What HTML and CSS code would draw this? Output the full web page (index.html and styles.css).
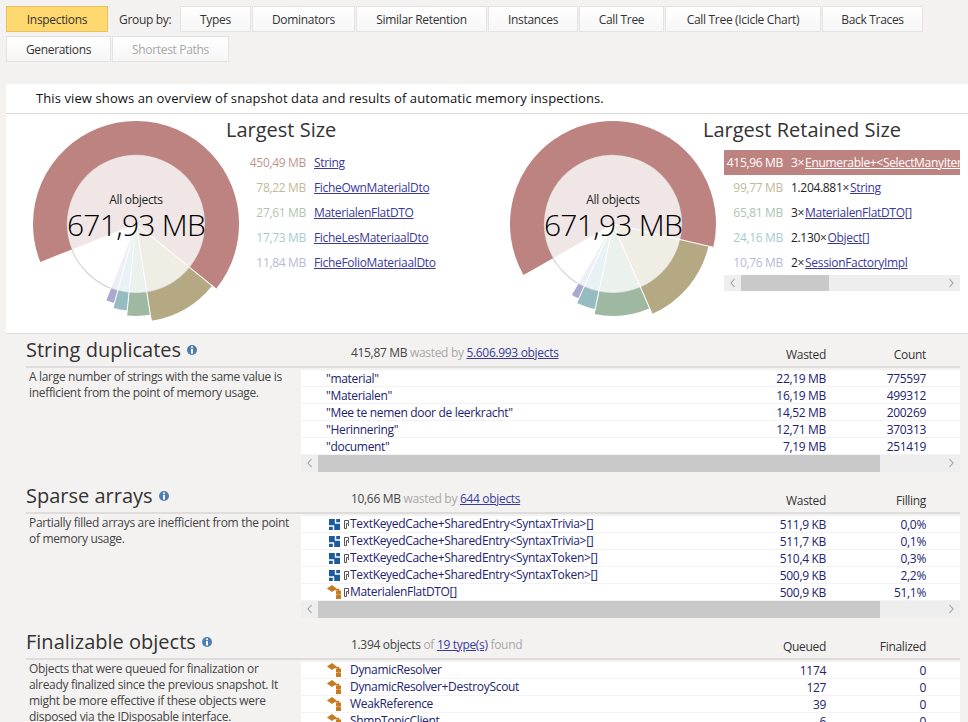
FILE: index.html
```html
<!DOCTYPE html>
<html lang="en">
<head>
  <meta charset="UTF-8">
  <title>Inspections</title>
  <link rel="stylesheet" href="styles.css">
</head>
<body>
  <svg class="defs" width="0" height="0">
    <symbol id="i-array" viewBox="0 0 11 11">
      <rect width="11" height="11" fill="#1b5a9c"/>
      <path d="M6.500 0V4H11M0 7H4.500V11" fill="none" stroke="#fff" stroke-width="1.400"/>
    </symbol>
    <symbol id="i-class" viewBox="0 0 15 14">
      <path d="M5 0L9.500 3.500L5 7L0 3.500Z" fill="#c77b1f"/>
      <path d="M7 4.500H11.500V12" fill="none" stroke="#c77b1f" stroke-width="1.400"/>
      <rect x="9" y="5.500" width="5" height="4" fill="#c77b1f"/>
      <rect x="9" y="10" width="5" height="4" fill="#c77b1f"/>
    </symbol>
    <symbol id="i-ref" viewBox="0 0 5 9">
      <path d="M4.500 3V.5H.5V8.500H2.500V3.500H4.500V6" fill="none" stroke="#555" stroke-width="1"/>
    </symbol>
    <symbol id="i-info" viewBox="0 0 10 10">
      <circle cx="5" cy="5" r="5" fill="#4b7fb3"/>
      <rect x="4" y="1.500" width="2" height="1.600" fill="#fff"/>
      <rect x="4" y="4" width="2" height="4.500" fill="#fff"/>
    </symbol>
    <symbol id="i-left" viewBox="0 0 6 10">
      <path d="M4.500 1L1 5L4.500 9" fill="none" stroke="#a0a0a0" stroke-width="1.100"/>
    </symbol>
    <symbol id="i-right" viewBox="0 0 6 10">
      <path d="M1.500 1L5 5L1.500 9" fill="none" stroke="#a0a0a0" stroke-width="1.100"/>
    </symbol>
  </svg>

  <div class="toolbar">
    <button class="btn active w-inspections">Inspections</button>
    <span class="group-label">Group by:</span>
    <button class="btn w-types">Types</button>
    <button class="btn w-dominators">Dominators</button>
    <button class="btn w-similar">Similar Retention</button>
    <button class="btn w-instances">Instances</button>
    <button class="btn w-calltree">Call Tree</button>
    <button class="btn w-icicle">Call Tree (Icicle Chart)</button>
    <button class="btn w-back">Back Traces</button>
    <div class="break"></div>
    <button class="btn w-generations">Generations</button>
    <button class="btn disabled w-paths">Shortest Paths</button>
  </div>

  <div class="overview">
    <div class="banner">This view shows an overview of snapshot data and results of automatic memory inspections.</div>
    <div class="charts">
      <div class="chart">
        <svg class="donut" width="206" height="206" viewBox="-103 -103 206 206">
          <!-- inner tints -->
          <g fill="none" stroke-width="69">
            <circle r="34.500" pathLength="360" stroke="#f0e6e6" stroke-dasharray="240.600 360" transform="rotate(158.400)"/>
            <circle r="34.500" pathLength="360" stroke="#f0ede5" stroke-dasharray="41.900 360" transform="rotate(39)"/>
            <circle r="34.500" pathLength="360" stroke="#ebf1ec" stroke-dasharray="14.800 360" transform="rotate(81)"/>
            <circle r="34.500" pathLength="360" stroke="#e8f1f3" stroke-dasharray="9.500 360" transform="rotate(95.800)"/>
            <circle r="34.500" pathLength="360" stroke="#eeeef6" stroke-dasharray="6.300 360" transform="rotate(105.300)"/>
          </g>
          <circle class="ring" r="69"/>
          <!-- outer slices -->
          <g fill="none">
            <circle r="86" stroke-width="34" pathLength="360" stroke="#bd8380" stroke-dasharray="240.600 360" transform="rotate(158.400)"/>
            <circle r="83.500" stroke-width="29" pathLength="360" stroke="#b5a983" stroke-dasharray="41.900 360" transform="rotate(39)"/>
            <circle r="80.500" stroke-width="23" pathLength="360" stroke="#9fb8a1" stroke-dasharray="14.800 360" transform="rotate(81)"/>
            <circle r="78" stroke-width="18" pathLength="360" stroke="#96bcc2" stroke-dasharray="9.500 360" transform="rotate(95.800)"/>
            <circle r="75.500" stroke-width="13" pathLength="360" stroke="#a9a9d1" stroke-dasharray="6.300 360" transform="rotate(105.300)"/>
          </g>
          <g class="seps">
            <line y2="-103" transform="rotate(129)"/>
            <line y2="-103" transform="rotate(171)"/>
            <line y2="-103" transform="rotate(185.800)"/>
            <line y2="-103" transform="rotate(195.300)"/>
            <line y2="-103" transform="rotate(201.600)"/>
          </g>
          <text class="donut-label" y="-20">All objects</text>
          <text class="donut-total" y="12">671,93 MB</text>
        </svg>
        <div class="chart-info">
          <h2 class="chart-title">Largest Size</h2>
          <div class="size-list">
            <div class="size-row"><span class="size c1">450,49 MB</span><a href="#">String</a></div>
            <div class="size-row"><span class="size c2">78,22 MB</span><a href="#">FicheOwnMaterialDto</a></div>
            <div class="size-row"><span class="size c3">27,61 MB</span><a href="#">MaterialenFlatDTO</a></div>
            <div class="size-row"><span class="size c4">17,73 MB</span><a href="#">FicheLesMateriaalDto</a></div>
            <div class="size-row"><span class="size c5">11,84 MB</span><a href="#">FicheFolioMateriaalDto</a></div>
          </div>
        </div>
      </div>
      <div class="chart">
        <svg class="donut" width="206" height="206" viewBox="-103 -103 206 206">
          <g fill="none" stroke-width="69">
            <circle r="34.500" pathLength="360" stroke="#f0e6e6" stroke-dasharray="222.900 360" transform="rotate(150.300)"/>
            <circle r="34.500" pathLength="360" stroke="#f0ede5" stroke-dasharray="53.500 360" transform="rotate(13)"/>
            <circle r="34.500" pathLength="360" stroke="#ebf1ec" stroke-dasharray="35.300 360" transform="rotate(66.500)"/>
            <circle r="34.500" pathLength="360" stroke="#e8f1f3" stroke-dasharray="12.900 360" transform="rotate(101.800)"/>
            <circle r="34.500" pathLength="360" stroke="#eeeef6" stroke-dasharray="5.800 360" transform="rotate(114.700)"/>
          </g>
          <circle class="ring" r="69"/>
          <g fill="none">
            <circle r="86" stroke-width="34" pathLength="360" stroke="#bd8380" stroke-dasharray="222.900 360" transform="rotate(150.300)"/>
            <circle r="83.500" stroke-width="29" pathLength="360" stroke="#b5a983" stroke-dasharray="53.500 360" transform="rotate(13)"/>
            <circle r="80.500" stroke-width="23" pathLength="360" stroke="#9fb8a1" stroke-dasharray="35.300 360" transform="rotate(66.500)"/>
            <circle r="78" stroke-width="18" pathLength="360" stroke="#96bcc2" stroke-dasharray="12.900 360" transform="rotate(101.800)"/>
            <circle r="75.500" stroke-width="13" pathLength="360" stroke="#a9a9d1" stroke-dasharray="5.800 360" transform="rotate(114.700)"/>
          </g>
          <g class="seps">
            <line y2="-103" transform="rotate(103)"/>
            <line y2="-103" transform="rotate(156.500)"/>
            <line y2="-103" transform="rotate(191.800)"/>
            <line y2="-103" transform="rotate(204.700)"/>
            <line y2="-103" transform="rotate(210.500)"/>
          </g>
          <text class="donut-label" y="-20">All objects</text>
          <text class="donut-total" y="12">671,93 MB</text>
        </svg>
        <div class="chart-info">
          <h2 class="chart-title">Largest Retained Size</h2>
          <div class="size-list clipped">
            <div class="size-row selected"><span class="size">415,96 MB</span>3×<a href="#">Enumerable+&lt;SelectManyIterator&gt;</a></div>
            <div class="size-row"><span class="size c2">99,77 MB</span>1.204.881×<a href="#">String</a></div>
            <div class="size-row"><span class="size c3">65,81 MB</span>3×<a href="#">MaterialenFlatDTO[]</a></div>
            <div class="size-row"><span class="size c4">24,16 MB</span>2.130×<a href="#">Object[]</a></div>
            <div class="size-row"><span class="size c5">10,76 MB</span>2×<a href="#">SessionFactoryImpl</a></div>
          </div>
          <div class="hscroll short">
            <svg class="arrow" width="6" height="10"><use href="#i-left"/></svg>
            <div class="thumb"></div>
            <svg class="arrow" width="6" height="10"><use href="#i-right"/></svg>
          </div>
        </div>
      </div>
    </div>
  </div>

  <section class="inspection">
    <div class="insp-head">
      <div class="insp-title"><h3>String duplicates</h3><svg width="10" height="10"><use href="#i-info"/></svg></div>
      <div class="summary">415,87 MB <span class="muted">wasted by</span> <a href="#">5.606.993 objects</a></div>
      <div class="col-a">Wasted</div>
      <div class="col-b">Count</div>
    </div>
    <div class="insp-body">
      <p class="desc">A large number of strings with the same value is inefficient from the point of memory usage.</p>
      <div class="table">
        <div class="row"><span class="name">"material"</span><span class="col-a">22,19 MB</span><span class="col-b">775597</span></div>
        <div class="row"><span class="name">"Materialen"</span><span class="col-a">16,19 MB</span><span class="col-b">499312</span></div>
        <div class="row"><span class="name">"Mee te nemen door de leerkracht"</span><span class="col-a">14,52 MB</span><span class="col-b">200269</span></div>
        <div class="row"><span class="name">"Herinnering"</span><span class="col-a">12,71 MB</span><span class="col-b">370313</span></div>
        <div class="row"><span class="name">"document"</span><span class="col-a">7,19 MB</span><span class="col-b">251419</span></div>
        <div class="hscroll wide">
          <svg class="arrow" width="6" height="10"><use href="#i-left"/></svg>
          <div class="thumb"></div>
          <svg class="arrow" width="6" height="10"><use href="#i-right"/></svg>
        </div>
      </div>
    </div>
  </section>

  <section class="inspection">
    <div class="insp-head">
      <div class="insp-title"><h3>Sparse arrays</h3><svg width="10" height="10"><use href="#i-info"/></svg></div>
      <div class="summary">10,66 MB <span class="muted">wasted by</span> <a href="#">644 objects</a></div>
      <div class="col-a">Wasted</div>
      <div class="col-b">Filling</div>
    </div>
    <div class="insp-body">
      <p class="desc">Partially filled arrays are inefficient from the point of memory usage.</p>
      <div class="table">
        <div class="row"><span class="name icon-name"><svg class="ico-array" width="11" height="11"><use href="#i-array"/></svg><svg class="ico-ref" width="5" height="9"><use href="#i-ref"/></svg>TextKeyedCache+SharedEntry&lt;SyntaxTrivia&gt;[]</span><span class="col-a">511,9 KB</span><span class="col-b">0,0%</span></div>
        <div class="row"><span class="name icon-name"><svg class="ico-array" width="11" height="11"><use href="#i-array"/></svg><svg class="ico-ref" width="5" height="9"><use href="#i-ref"/></svg>TextKeyedCache+SharedEntry&lt;SyntaxTrivia&gt;[]</span><span class="col-a">511,7 KB</span><span class="col-b">0,1%</span></div>
        <div class="row"><span class="name icon-name"><svg class="ico-array" width="11" height="11"><use href="#i-array"/></svg><svg class="ico-ref" width="5" height="9"><use href="#i-ref"/></svg>TextKeyedCache+SharedEntry&lt;SyntaxToken&gt;[]</span><span class="col-a">510,4 KB</span><span class="col-b">0,3%</span></div>
        <div class="row"><span class="name icon-name"><svg class="ico-array" width="11" height="11"><use href="#i-array"/></svg><svg class="ico-ref" width="5" height="9"><use href="#i-ref"/></svg>TextKeyedCache+SharedEntry&lt;SyntaxToken&gt;[]</span><span class="col-a">500,9 KB</span><span class="col-b">2,2%</span></div>
        <div class="row"><span class="name icon-name"><svg class="ico-class" width="15" height="14"><use href="#i-class"/></svg><svg class="ico-ref" width="5" height="9"><use href="#i-ref"/></svg>MaterialenFlatDTO[]</span><span class="col-a">500,9 KB</span><span class="col-b">51,1%</span></div>
        <div class="hscroll wide">
          <svg class="arrow" width="6" height="10"><use href="#i-left"/></svg>
          <div class="thumb"></div>
          <svg class="arrow" width="6" height="10"><use href="#i-right"/></svg>
        </div>
      </div>
    </div>
  </section>

  <section class="inspection">
    <div class="insp-head">
      <div class="insp-title"><h3>Finalizable objects</h3><svg width="10" height="10"><use href="#i-info"/></svg></div>
      <div class="summary">1.394 objects <span class="muted">of</span> <a href="#">19 type(s)</a> <span class="muted">found</span></div>
      <div class="col-a">Queued</div>
      <div class="col-b">Finalized</div>
    </div>
    <div class="insp-body">
      <p class="desc">Objects that were queued for finalization or already finalized since the previous snapshot. It might be more effective if these objects were disposed via the IDisposable interface.</p>
      <div class="table">
        <div class="row"><span class="name icon-name"><svg class="ico-class spaced" width="15" height="14"><use href="#i-class"/></svg>DynamicResolver</span><span class="col-a">1174</span><span class="col-b">0</span></div>
        <div class="row"><span class="name icon-name"><svg class="ico-class spaced" width="15" height="14"><use href="#i-class"/></svg>DynamicResolver+DestroyScout</span><span class="col-a">127</span><span class="col-b">0</span></div>
        <div class="row"><span class="name icon-name"><svg class="ico-class spaced" width="15" height="14"><use href="#i-class"/></svg>WeakReference</span><span class="col-a">39</span><span class="col-b">0</span></div>
        <div class="row"><span class="name icon-name"><svg class="ico-class spaced" width="15" height="14"><use href="#i-class"/></svg>ShmpTopicClient</span><span class="col-a">6</span><span class="col-b">0</span></div>
      </div>
    </div>
  </section>
</body>
</html>
```

FILE: styles.css
```css
html, body { margin: 0; height: 722px; overflow: hidden; }
body { background: #f3f2f1; color: #222; font-family: "Open Sans", "Noto Sans", sans-serif; font-size: 12px; letter-spacing: -0.32px; }
a { color: #3a3a9a; }
h2, h3, p { margin: 0; font-weight: normal; }
.defs { position: absolute; }

.toolbar { display: flex; flex-wrap: wrap; align-items: center; align-content: flex-start; gap: 2px 1px; padding: 6px 0 0 6px; height: 84px; box-sizing: border-box; }
.break { width: 100%; height: 0; }
.btn { height: 26px; padding: 0; border: 1px solid #e3e3e3; background: linear-gradient(#fff, #f6f6f6); color: #333; font: inherit; letter-spacing: inherit; }
.btn.active { background: #ffd970; border-color: #e8c063; }
.btn.disabled { color: #a8a8a8; }
.group-label { width: 70px; padding-left: 10px; box-sizing: border-box; color: #333; }
.w-inspections { width: 102px; }
.w-types { width: 71px; }
.w-dominators { width: 103px; }
.w-similar { width: 131px; }
.w-instances { width: 90px; }
.w-calltree { width: 85px; }
.w-icicle { width: 156px; }
.w-back { width: 101px; }
.w-generations { width: 105px; }
.w-paths { width: 117px; }

.overview { margin-left: 6px; background: #fff; border-bottom: 1px solid #ddd; height: 250px; box-sizing: border-box; }
.banner { height: 30px; line-height: 29px; box-sizing: border-box; padding-left: 30px; border-bottom: 1px solid #ddd; font-size: 13px; letter-spacing: 0.1px; color: #111; }
.charts { display: flex; }
.chart { display: flex; align-items: flex-start; width: 477px; padding-left: 27px; box-sizing: border-box; flex: none; }
.donut { flex: none; margin-top: 7px; overflow: visible; }
.ring { fill: none; stroke: #d6d6d6; stroke-width: 1.2; }
.seps line { stroke: #fff; stroke-width: 1; }
.donut-label { text-anchor: middle; font-size: 12px; fill: #222; }
.donut-total { text-anchor: middle; font-size: 30px; font-weight: 300; letter-spacing: -0.7px; fill: #000; }
.chart-info { margin-left: -13px; width: 257px; flex: none; position: relative; }
.chart-title { font-size: 20px; letter-spacing: 0; line-height: 32px; margin-bottom: 4px; color: #333; }
.size-list { margin-left: 21px; white-space: nowrap; }
.size-list.clipped { overflow: hidden; width: 236px; }
.size-list.clipped a { margin-left: 1px; }
.size-row { display: flex; height: 25px; line-height: 25px; }
.size { width: 59px; margin-right: 8px; text-align: right; flex: none; }
.c1 { color: #c29390; }
.c2 { color: #c4b998; }
.c3 { color: #abc6ae; }
.c4 { color: #a5ccd1; }
.c5 { color: #b8b8dc; }
.size-row.selected { background: #bd8380; color: #fff; }
.size-row.selected a { color: #fff; }

.hscroll { display: flex; align-items: center; height: 17px; background: #eee; position: relative; }
.hscroll .arrow { position: absolute; top: 3px; }
.hscroll .arrow:first-child { left: 6px; }
.hscroll .arrow:last-child { right: 6px; }
.hscroll .thumb { height: 100%; background: #c9c9c9; margin-left: 17px; }
.hscroll.short { width: 236px; margin: 0 0 0 21px; height: 16px; }
.hscroll.short .thumb { width: 88px; }
.hscroll.wide .thumb { width: 562px; }

.inspection { height: 146px; padding: 0 8px 0 26px; overflow: hidden; box-sizing: border-box; }
.inspection:last-child { height: 96px; }
.insp-head { display: flex; height: 32px; border-bottom: 2px solid #dedddc; align-items: center; }
.insp-title { width: 325px; flex: none; display: flex; align-items: center; gap: 6px; padding-bottom: 1px; }
.insp-title h3 { font-size: 20px; letter-spacing: 0; color: #333; }
.summary { flex: 1; padding-top: 4px; color: #444; }
.muted { color: #a8a8a8; }
.insp-head .col-a, .insp-head .col-b { padding-top: 9px; color: #333; }
.col-a { width: 100px; text-align: right; flex: none; }
.col-b { width: 100px; margin-right: 34px; text-align: right; flex: none; }
.insp-body { display: flex; padding-top: 2px; }
.desc { width: 265px; margin: -1px 7px 0 3px; flex: none; line-height: 16px; color: #444; }
.table { width: 659px; flex: none; }
.row { display: flex; height: 17px; line-height: 18px; background: #fff; border-bottom: 1px solid #f3f3f3; box-sizing: border-box; color: #22226e; white-space: nowrap; }
.row .name { flex: 1; padding-left: 25px; }
.row .icon-name { display: flex; align-items: center; }
.ico-array { margin: 0 4px 0 3px; flex: none; }
.ico-class { margin: 0 2px 0 1px; flex: none; }
.ico-class.spaced { margin-right: 8px; }
.ico-ref { margin-right: 1px; flex: none; }
```
